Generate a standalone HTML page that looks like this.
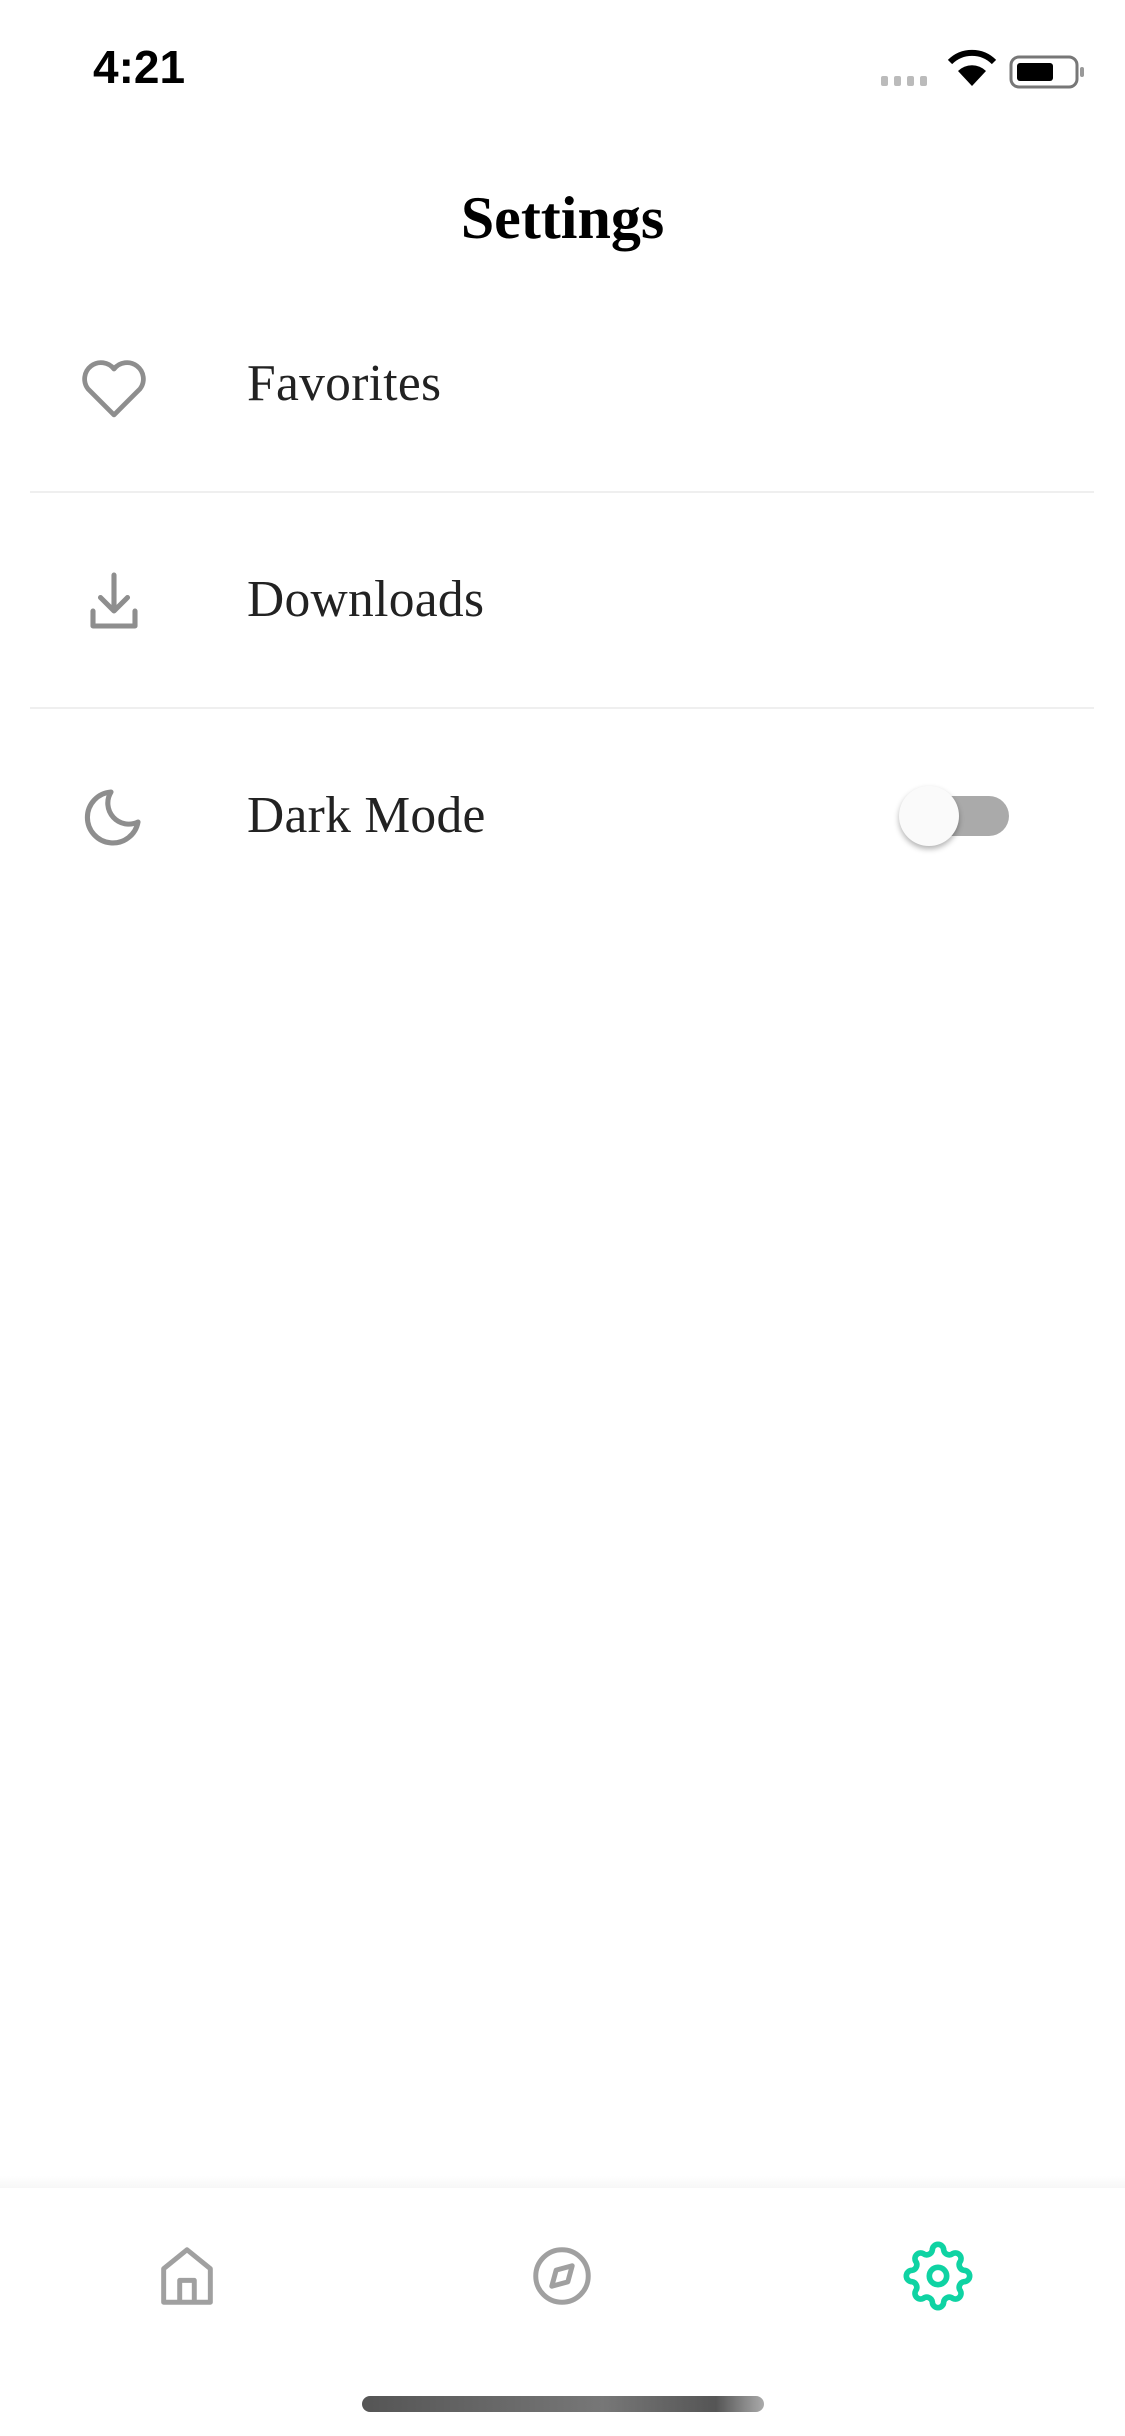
<!DOCTYPE html>
<html><head><meta charset="utf-8"><style>
html,body{margin:0;padding:0;background:#fff;}
body{width:1125px;height:2436px;position:relative;overflow:hidden;font-family:"Liberation Serif",serif;}
.abs{position:absolute;}
.time{left:93px;top:40px;font:bold 46px "Liberation Sans",sans-serif;color:#000;}
.title{left:0;width:1125px;top:184px;text-align:center;font-weight:bold;font-size:60px;color:#000;}
.row{left:247px;font-size:51.5px;color:#222;line-height:60px;letter-spacing:0.3px;}
.sep{left:30px;width:1064px;height:2px;background:#efefef;}
</style></head><body>
<div class="abs time">4:21</div>
<svg class="abs" style="left:880px;top:48px" width="210" height="44" viewBox="0 0 210 44">
 <g fill="#bbb"><rect x="1" y="28" width="7" height="10" rx="2"/><rect x="14" y="28" width="7" height="10" rx="2"/><rect x="27" y="28" width="7" height="10" rx="2"/><rect x="40" y="28" width="7" height="10" rx="2"/></g>
 <path d="M92 38 L78 23 A20 20 0 0 1 106 23 Z" fill="#000"/>
 <path d="M70 14 A31 31 0 0 1 114 14" stroke="#000" stroke-width="6" fill="none"/>
 <rect x="131" y="9" width="66" height="30" rx="8" fill="none" stroke="#777" stroke-width="3"/>
 <rect x="137" y="15" width="36" height="18" rx="3" fill="#000"/>
 <rect x="200" y="19" width="4" height="10" rx="2" fill="#999"/>
</svg>
<div class="abs title">Settings</div>

<svg class="abs" style="left:76px;top:350px" width="76" height="76" viewBox="0 0 24 24"><path d="M12 20.5 L3.8 12.3 A4.8 4.8 0 0 1 12 6 A4.8 4.8 0 0 1 20.2 12.3 Z" fill="none" stroke="#8e8e8e" stroke-width="1.5" stroke-linejoin="round"/></svg>
<div class="abs row" style="top:354px">Favorites</div>
<div class="abs sep" style="top:491px"></div>

<svg class="abs" style="left:78px;top:566px" width="72" height="72" viewBox="0 0 24 24"><path d="M12 3 V15 M7.5 10.5 L12 15 L16.5 10.5 M5 15 V20 H19 V15" fill="none" stroke="#8e8e8e" stroke-width="1.7" stroke-linecap="round" stroke-linejoin="round"/></svg>
<div class="abs row" style="top:570px">Downloads</div>
<div class="abs sep" style="top:707px"></div>

<svg class="abs" style="left:78px;top:780px" width="72" height="72" viewBox="0 0 24 24"><path d="M11 4 A8.5 8.5 0 1 0 20 14 A7 7 0 0 1 11 4 Z" fill="none" stroke="#8e8e8e" stroke-width="1.7" stroke-linejoin="round"/></svg>
<div class="abs row" style="top:786px">Dark Mode</div>
<div class="abs" style="left:929px;top:796px;width:80px;height:40px;border-radius:20px;background:#aaa"></div>
<div class="abs" style="left:899px;top:786px;width:60px;height:60px;border-radius:50%;background:#fafafa;box-shadow:0 3px 6px rgba(0,0,0,.3)"></div>

<div class="abs" style="left:0;top:2176px;width:1125px;height:12px;background:linear-gradient(#fff,#f7f7f7)"></div>
<svg class="abs" style="left:152px;top:2241px" width="70" height="70" viewBox="0 0 24 24"><path d="M4 21 V9.5 L12 3 L20 9.5 V21 Z M9.5 21 V13.5 H14.5 V21" fill="none" stroke="#a0a0a0" stroke-width="1.7" stroke-linejoin="round"/></svg>
<svg class="abs" style="left:527px;top:2241px" width="70" height="70" viewBox="0 0 24 24"><circle cx="12" cy="12" r="9" fill="none" stroke="#a0a0a0" stroke-width="1.7"/><path d="M15.5 8.5 L14 14 L8.5 15.5 L10 10 Z" fill="none" stroke="#a0a0a0" stroke-width="1.7" stroke-linejoin="round"/></svg>
<svg class="abs" style="left:898px;top:2236px" width="80" height="80" viewBox="0 0 24 24"><circle cx="12" cy="12" r="2.6" fill="none" stroke="#0fd3a3" stroke-width="1.7"/><path d="M10.3 4.2 A1.7 1.7 0 0 1 13.7 4.2 A1.7 1.7 0 0 0 16.4 5.3 A1.7 1.7 0 0 1 18.7 7.6 A1.7 1.7 0 0 0 19.8 10.3 A1.7 1.7 0 0 1 19.8 13.7 A1.7 1.7 0 0 0 18.7 16.4 A1.7 1.7 0 0 1 16.4 18.7 A1.7 1.7 0 0 0 13.7 19.8 A1.7 1.7 0 0 1 10.3 19.8 A1.7 1.7 0 0 0 7.6 18.7 A1.7 1.7 0 0 1 5.3 16.4 A1.7 1.7 0 0 0 4.2 13.7 A1.7 1.7 0 0 1 4.2 10.3 A1.7 1.7 0 0 0 5.3 7.6 A1.7 1.7 0 0 1 7.6 5.3 A1.7 1.7 0 0 0 10.3 4.2 Z" fill="none" stroke="#0fd3a3" stroke-width="1.7" stroke-linejoin="round"/></svg>
<div class="abs" style="left:362px;top:2396px;width:402px;height:16px;border-radius:8px;background:linear-gradient(90deg,#555,#777 60%,#555 88%,#aaa)"></div>
</body></html>
